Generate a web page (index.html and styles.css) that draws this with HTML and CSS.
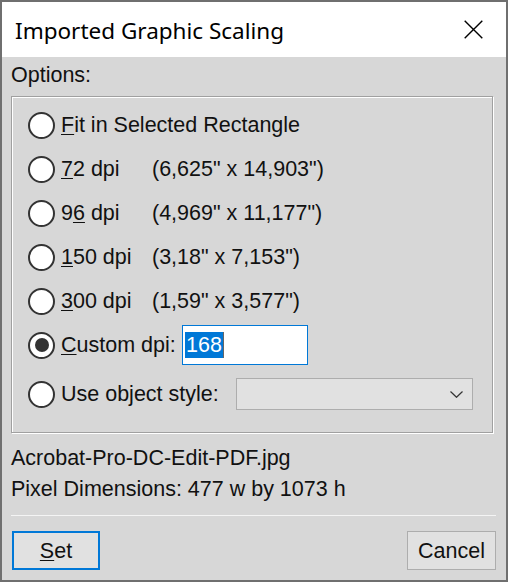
FILE: index.html
```html
<!DOCTYPE html>
<html>
<head>
<meta charset="utf-8">
<link rel="stylesheet" href="styles.css">
</head>
<body>
<div class="window">
  <div class="titlebar">
    <span class="title">Imported Graphic Scaling</span>
    <svg class="close" width="19" height="19" viewBox="0 0 19 19"><path d="M0.7 0.7L18.3 18.3M18.3 0.7L0.7 18.3" stroke="#000" stroke-width="1.4" fill="none"/></svg>
  </div>
  <div class="content">
    <div class="options-label">Options:</div>
    <div class="group">
      <div class="row"><span class="radio"></span><span class="label"><u>F</u>it in Selected Rectangle</span></div>
      <div class="row"><span class="radio"></span><span class="label col1"><u>7</u>2 dpi</span><span class="dims">(6,625" x 14,903")</span></div>
      <div class="row"><span class="radio"></span><span class="label col1">9<u>6</u> dpi</span><span class="dims">(4,969" x 11,177")</span></div>
      <div class="row"><span class="radio"></span><span class="label col1"><u>1</u>50 dpi</span><span class="dims">(3,18" x 7,153")</span></div>
      <div class="row"><span class="radio"></span><span class="label col1"><u>3</u>00 dpi</span><span class="dims">(1,59" x 3,577")</span></div>
      <div class="row"><span class="radio checked"></span><span class="label col-custom"><u>C</u>ustom dpi:</span><div class="input"><span class="sel">168</span><span class="caret"></span></div></div>
      <div class="row last"><span class="radio"></span><span class="label col-style">Use object style:</span><div class="select"><svg width="13" height="7" viewBox="0 0 13 7"><path d="M0.5 0.5L6.5 6.3L12.5 0.5" stroke="#333" stroke-width="1.2" fill="none"/></svg></div></div>
    </div>
    <div class="info">
      <div>Acrobat-Pro-DC-Edit-PDF.jpg</div>
      <div>Pixel Dimensions: 477 w by 1073 h</div>
    </div>
    <div class="sep"></div>
    <div class="buttons">
      <div class="btn default"><u>S</u>et</div>
      <div class="btn cancel">Cancel</div>
    </div>
  </div>
</div>
</body>
</html>
```

FILE: styles.css
```css
* { box-sizing: border-box; }
html, body { margin: 0; padding: 0; }
body { width: 508px; height: 582px; overflow: hidden; background: #d7d7d7; }

.window {
  width: 508px;
  height: 582px;
  border: 2px solid #6f6f6f;
  background: #d7d7d7;
  display: flex;
  flex-direction: column;
  font-family: "Liberation Sans", Arial, sans-serif;
  font-size: 21.5px;
  color: #111;
}

.titlebar {
  height: 55px;
  background: #fff;
  display: flex;
  align-items: center;
  justify-content: space-between;
  padding: 0 23px 0 13px;
}
.title {
  font-family: "Noto Sans", "Open Sans", sans-serif;
  font-size: 22.5px;
  line-height: 55px;
  padding-top: 2px;
  color: #000;
}
.close { display: block; margin-top: -1px; }

.content {
  padding: 6px 10px 10px 9px;
  display: flex;
  flex-direction: column;
}
.options-label { line-height: 24px; }

.group {
  margin-top: 9px;
  margin-right: 3px;
  border: 1px solid #a0a0a0;
  box-shadow: inset 1px 1px 0 #fff, 1px 1px 0 #fff;
  padding: 6px 0 16px 16px;
}
.row {
  height: 44px;
  display: flex;
  align-items: center;
  line-height: 24px;
}
.row.last { margin-top: 5px; }

.radio {
  width: 27px;
  height: 27px;
  border: 2px solid #333;
  border-radius: 50%;
  background: #fff;
  margin-right: 6px;
  flex: none;
  display: flex;
  align-items: center;
  justify-content: center;
}
.radio.checked::after {
  content: "";
  width: 14px;
  height: 14px;
  border-radius: 50%;
  background: #333;
}
u { text-decoration: underline; text-underline-offset: 2px; text-decoration-thickness: 1px; }

.label { white-space: nowrap; }
.col1 { width: 91px; }
.col-custom { width: 121px; }
.col-style { width: 175px; }
.dims { white-space: nowrap; }

.input {
  width: 126px;
  height: 40px;
  border: 1px solid #0078d7;
  background: #fff;
  display: flex;
  align-items: center;
  padding-left: 2px;
}
.sel {
  background: #0078d7;
  color: #fff;
  height: 26px;
  line-height: 26px;
  padding: 0 1px 0 1px;
}
.caret { width: 1px; height: 26px; background: #666; }

.select {
  width: 237px;
  height: 32px;
  border: 1px solid #adadad;
  background: #e1e1e1;
  display: flex;
  align-items: center;
  justify-content: flex-end;
  padding: 1px 9px 0 0;
}
.select svg { display: block; }

.info { margin-top: 10px; line-height: 31px; }

.sep {
  margin-top: 10px;
  height: 1px;
  background: #f4f4f4;
}

.buttons {
  margin-top: 15px;
  display: flex;
  justify-content: space-between;
  padding-left: 1px;
}
.btn {
  height: 39px;
  background: #e1e1e1;
  display: flex;
  align-items: center;
  justify-content: center;
  line-height: 24px;
}
.btn.default { width: 88px; border: 2px solid #0078d7; }
.btn.cancel { width: 89px; border: 1px solid #adadad; }
```
